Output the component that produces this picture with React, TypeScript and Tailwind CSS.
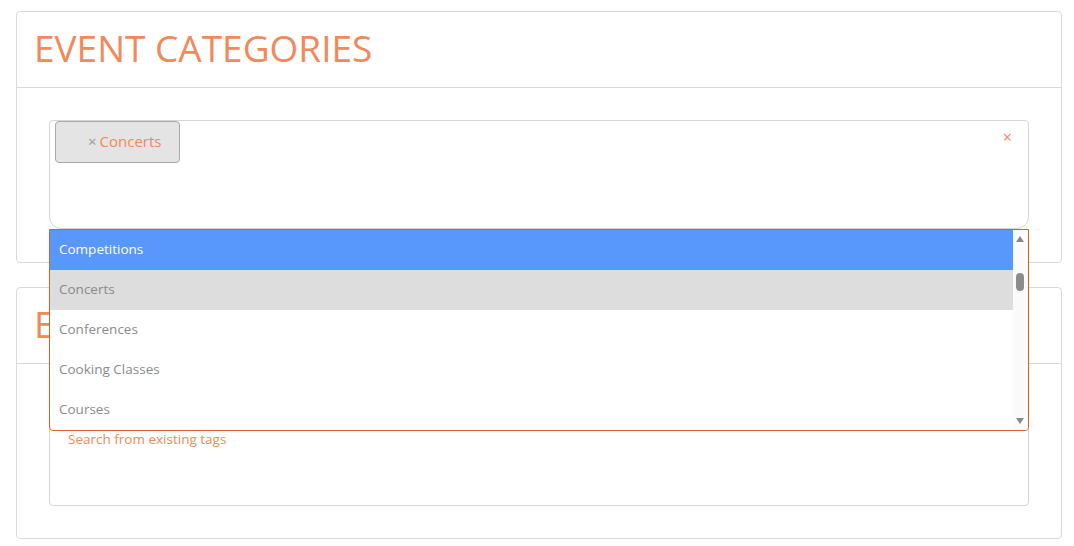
import React from "react";

const orange = "text-[#f0895b]";

function Card({ title, children, pb }: { title: string; children: React.ReactNode; pb: string }) {
  return (
    <div className="w-[1046px] border border-[#dadada] rounded-[4px] bg-white">
      <div className="h-[76px] border-b border-[#dadada] flex items-center px-[17px]">
        <h2 className={`text-[37px] leading-none ${orange} font-normal -mt-[5px]`}>{title}</h2>
      </div>
      <div className={`px-[32px] pt-[32px] ${pb} relative`}>{children}</div>
    </div>
  );
}

const items = ["Competitions", "Concerts", "Conferences", "Cooking Classes", "Courses"];

export default function App() {
  return (
    <div
      className="min-h-[546px] bg-white pt-[11px] pl-4 flex flex-col gap-[24px]"
      style={{ fontFamily: '"Open Sans", "Noto Sans", sans-serif' }}
    >
      <Card title="EVENT CATEGORIES" pb="pb-[33px]">
        <div className="h-[109px] border border-[#d6d6d6] rounded-t-[4px] rounded-b-[12px] relative">
          <div className="ml-[5px] w-[125px] h-[42px] bg-[#e4e4e4] border border-[#aaaaaa] rounded-[4px] flex items-center pl-[32px] pb-[2px]">
            <span className="text-[#999999] text-[15px] mr-[3px] leading-none">×</span>
            <span className={`text-[15px] ${orange}`}>Concerts</span>
          </div>
          <span className={`absolute right-[16px] top-[4px] text-[16px] ${orange}`}>×</span>
        </div>
        <div className="absolute left-[32px] top-[141px] w-[980px] h-[202px] border border-[#d3622a] rounded-b-[4px] bg-white z-10 flex overflow-hidden">
          <div className="flex-1 flex flex-col">
            {items.map((it, i) => (
              <div
                key={it}
                className={`h-[40px] shrink-0 flex items-center pl-[9px] pb-[2px] text-[13.5px] ${
                  i === 0 ? "bg-[#5897fb] text-white" : i === 1 ? "bg-[#dddddd] text-[#8a8a8a]" : "text-[#8a8a8a]"
                }`}
              >
                {it}
              </div>
            ))}
          </div>
          <div className="w-[15px] bg-[#fafafa] relative">
            <div className="absolute left-[3px] top-[6px] w-0 h-0 border-l-[4px] border-r-[4px] border-b-[6px] border-l-transparent border-r-transparent border-b-[#888]" />
            <div className="absolute left-[3px] top-[43px] w-[8px] h-[18px] rounded-[4px] bg-[#8c8c8c]" />
            <div className="absolute left-[3px] bottom-[6px] w-0 h-0 border-l-[4px] border-r-[4px] border-t-[6px] border-l-transparent border-r-transparent border-t-[#888]" />
          </div>
        </div>
      </Card>
      <Card title="EVENT TAGS" pb="pb-[32px]">
        <div className="h-[110px] border border-[#d6d6d6] rounded-[4px] pt-[29px] pl-[18px]">
          <span className={`text-[13.5px] ${orange}`}>Search from existing tags</span>
        </div>
      </Card>
    </div>
  );
}
